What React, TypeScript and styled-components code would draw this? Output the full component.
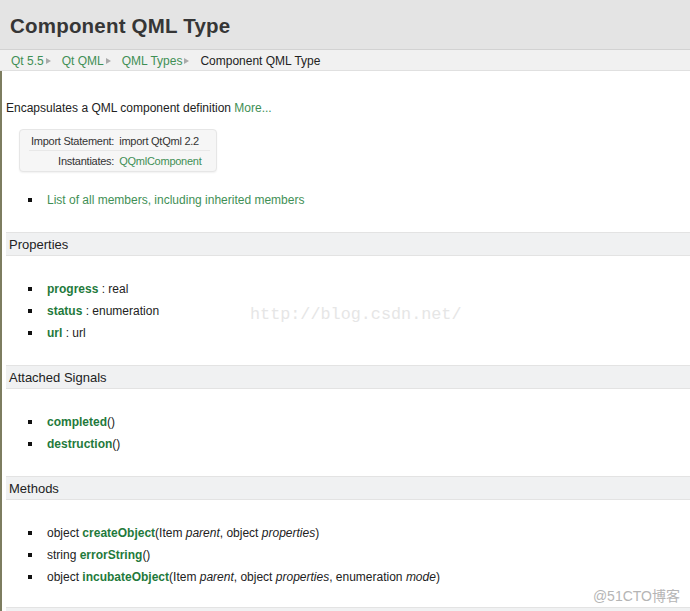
import React from "react";
import styled, { createGlobalStyle } from "styled-components";

const GlobalStyle = createGlobalStyle`
  body {
    margin: 0;
    background: #fff;
    font-family: "Liberation Sans", Arial, sans-serif;
    color: #222;
  }
`;

const Page = styled.div`
  position: relative;
  width: 690px;
  height: 611px;
  overflow: hidden;
  background: #fff;
`;

const TitleBar = styled.div`
  height: 50px;
  background: #e4e4e4;
  border-bottom: 1px solid #d2d2d2;
  display: flex;
  align-items: center;
  padding-left: 10px;
  box-sizing: border-box;
`;

const Title = styled.h1`
  margin: 0;
  padding-top: 2px;
  font-size: 20.5px;
  font-weight: bold;
  color: #363636;
  letter-spacing: 0.2px;
`;

const Crumbs = styled.div`
  height: 19px;
  padding-top: 1px;
  background: #f1f1f1;
  border-bottom: 1px solid #e0e0e0;
  display: flex;
  align-items: center;
  gap: 11px;
  padding-left: 11px;
  font-size: 12px;
`;

const Crumb = styled.span<{ $current?: boolean }>`
  color: ${(p) => (p.$current ? "#222" : "#3f8f55")};
  display: flex;
  align-items: center;
  &::after {
    content: ${(p) => (p.$current ? "none" : '""')};
    margin-left: 2px;
    border-left: 5px solid #aaa;
    border-top: 3.5px solid transparent;
    border-bottom: 3.5px solid transparent;
  }
`;

const Body = styled.div`
  border-left: 2px solid #7d7d60;
  padding: 30px 0 0 4px;
  font-size: 12px;
  height: 560px;
  box-sizing: border-box;
`;

const Intro = styled.p`
  margin: 0 0 14px 0;
  font-size: 12px;
`;

const Link = styled.span`
  color: #3f8f55;
`;

const InfoTable = styled.table`
  margin-left: 13px;
  background: #f6f6f6;
  border: 1px solid #e6e6e6;
  border-radius: 4px;
  border-collapse: separate;
  border-spacing: 0;
  font-size: 11px;
  letter-spacing: -0.25px;
  padding: 1px 6px 1px 9px;
  box-shadow: 0 1px 2px rgba(0, 0, 0, 0.06);
`;

const Row = styled.tr<{ $last?: boolean }>`
  td {
    height: 19px;
    border-bottom: ${(p) => (p.$last ? "none" : "1px solid #e8e8e8")};
    padding: 0 2px;
  }
`;

const Key = styled.td`
  text-align: right;
  color: #333;
`;

const Value = styled.td<{ $link?: boolean }>`
  color: ${(p) => (p.$link ? "#3f8f55" : "#333")};
  padding-left: 3px !important;
  padding-right: 8px !important;
`;

const List = styled.ul<{ $top: number; $bottom: number }>`
  list-style: none;
  margin: ${(p) => p.$top}px 0 ${(p) => p.$bottom}px 0;
  padding: 0 0 0 22px;
`;

const Item = styled.li`
  height: 22px;
  display: flex;
  align-items: center;
  font-size: 12px;
  color: #222;
  &::before {
    content: "";
    width: 4px;
    height: 4px;
    background: #111;
    margin-right: 15px;
    flex-shrink: 0;
  }
`;

const Name = styled.b`
  color: #1f7a3c;
  font-weight: bold;
`;

const SectionHead = styled.h2`
  margin: 0;
  height: 24px;
  box-sizing: border-box;
  background: #f0f1f2;
  border-top: 1px solid #e3e3e3;
  border-bottom: 1px solid #e3e3e3;
  display: flex;
  align-items: center;
  padding-left: 3px;
  font-size: 13px;
  font-weight: normal;
  color: #222;
`;

const Watermark = styled.div`
  position: absolute;
  left: 250px;
  top: 305px;
  font-family: "Liberation Mono", "DejaVu Sans Mono", monospace;
  font-size: 16.8px;
  color: #e6e6e6;
`;

const Stamp = styled.div`
  position: absolute;
  right: 10px;
  bottom: 6px;
  font-size: 14px;
  color: #b5b5b5;
  font-family: "Liberation Sans", "Noto Sans CJK SC", sans-serif;
`;

export default function App() {
  return (
    <Page>
      <GlobalStyle />
      <TitleBar>
        <Title>Component QML Type</Title>
      </TitleBar>
      <Crumbs>
        <Crumb>Qt 5.5</Crumb>
        <Crumb>Qt QML</Crumb>
        <Crumb>QML Types</Crumb>
        <Crumb $current>Component QML Type</Crumb>
      </Crumbs>
      <Body>
        <Intro>
          Encapsulates a QML component definition <Link>More...</Link>
        </Intro>
        <InfoTable>
          <tbody>
            <Row>
              <Key>Import Statement:</Key>
              <Value>import QtQml 2.2</Value>
            </Row>
            <Row $last>
              <Key>Instantiates:</Key>
              <Value $link>QQmlComponent</Value>
            </Row>
          </tbody>
        </InfoTable>
        <List $top={17} $bottom={21}>
          <Item>
            <Link>List of all members, including inherited members</Link>
          </Item>
        </List>

        <SectionHead>Properties</SectionHead>
        <List $top={22} $bottom={21}>
          <Item>
            <Name>progress</Name>&nbsp;: real
          </Item>
          <Item>
            <Name>status</Name>&nbsp;: enumeration
          </Item>
          <Item>
            <Name>url</Name>&nbsp;: url
          </Item>
        </List>

        <SectionHead>Attached Signals</SectionHead>
        <List $top={22} $bottom={21}>
          <Item>
            <Name>completed</Name>()
          </Item>
          <Item>
            <Name>destruction</Name>()
          </Item>
        </List>

        <SectionHead>Methods</SectionHead>
        <List $top={22} $bottom={19}>
          <Item>
            object&nbsp;<Name>createObject</Name>(Item&nbsp;<i>parent</i>, object&nbsp;
            <i>properties</i>)
          </Item>
          <Item>
            string&nbsp;<Name>errorString</Name>()
          </Item>
          <Item>
            object&nbsp;<Name>incubateObject</Name>(Item&nbsp;<i>parent</i>, object&nbsp;
            <i>properties</i>, enumeration&nbsp;<i>mode</i>)
          </Item>
        </List>
        <SectionHead />
      </Body>
      <Watermark>http://blog.csdn.net/</Watermark>
      <Stamp>@51CTO博客</Stamp>
    </Page>
  );
}
